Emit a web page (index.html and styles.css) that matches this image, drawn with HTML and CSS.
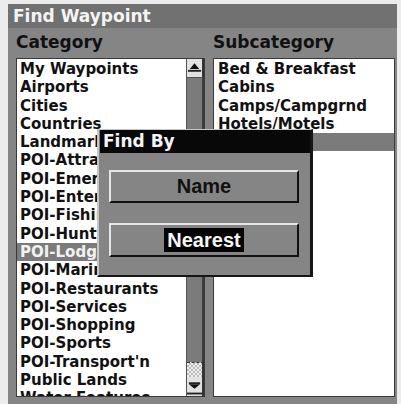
FILE: index.html
```html
<!DOCTYPE html>
<html>
<head>
<meta charset="utf-8">
<link rel="stylesheet" href="styles.css">
</head>
<body>
<div class="frame">
  <div class="titlebar">Find Waypoint</div>
  <div class="columns">
    <div class="col">
      <div class="head">Category</div>
      <div class="listbox">
        <ul class="items">
          <li>My Waypoints</li>
          <li>Airports</li>
          <li>Cities</li>
          <li>Countries</li>
          <li>Landmarks</li>
          <li>POI-Attractions</li>
          <li>POI-Emergency</li>
          <li>POI-Entertainment</li>
          <li>POI-Fishing</li>
          <li>POI-Hunting</li>
          <li class="sel">POI-Lodging</li>
          <li>POI-Marine</li>
          <li>POI-Restaurants</li>
          <li>POI-Services</li>
          <li>POI-Shopping</li>
          <li>POI-Sports</li>
          <li>POI-Transport'n</li>
          <li>Public Lands</li>
          <li>Water Features</li>
        </ul>
        <div class="scrollbar">
          <div class="sbtn up">
            <svg width="16" height="18" viewBox="0 0 16 18"><polygon points="3,10 13,10 8,4" fill="#111"/><rect x="1" y="11" width="14" height="2" fill="#222"/></svg>
          </div>
          <div class="track"></div>
          <div class="thumb"></div>
          <div class="sbtn down">
            <svg width="16" height="19" viewBox="0 0 16 19"><rect x="2" y="5" width="12" height="2" fill="#222"/><polygon points="2,7 14,7 8,12" fill="#111"/><rect x="0" y="16" width="16" height="2" fill="#222"/></svg>
          </div>
        </div>
      </div>
    </div>
    <div class="col">
      <div class="head">Subcategory</div>
      <div class="listbox">
        <ul class="items sub">
          <li>Bed &amp; Breakfast</li>
          <li>Cabins</li>
          <li>Camps/Campgrnd</li>
          <li>Hotels/Motels</li>
          <li class="sel">Other</li>
        </ul>
      </div>
    </div>
  </div>
  <div class="dialog">
    <div class="dtitle">Find By</div>
    <div class="dbody">
      <div class="btn">Name</div>
      <div class="btn"><span class="hl">Nearest</span></div>
    </div>
  </div>
</div>
</body>
</html>
```
FILE: styles.css
```css
html, body {
  margin: 0;
  padding: 0;
}
body {
  background: #ececec;
  width: 401px;
  height: 404px;
  overflow: hidden;
  font-family: "DejaVu Sans", sans-serif;
  font-weight: bold;
}
.frame {
  position: relative;
  margin: 4px 0 0 8px;
  width: 389px;
  height: 400px;
  background: #858585;
  overflow: hidden;
}
.titlebar {
  height: 24px;
  line-height: 24px;
  padding-left: 5px;
  font-size: 17px;
  color: #f4f4f4;
  background: #717171;
}
.columns {
  display: grid;
  grid-template-columns: 189px 182px;
  column-gap: 8px;
  padding-left: 8px;
}
.col {
  display: flex;
  flex-direction: column;
}
.head {
  height: 30px;
  line-height: 28px;
  font-size: 17px;
  color: #111;
}
.listbox {
  height: 339px;
  box-sizing: border-box;
  border: 1px solid #3a3a3a;
  background: #fff;
  display: flex;
  overflow: hidden;
}
.items {
  flex: 1;
  margin: 0;
  padding: 1px 0 0 0;
  list-style: none;
  font-size: 15px;
  line-height: 18.3px;
  color: #111;
  overflow: hidden;
  white-space: nowrap;
}
.items li {
  padding-left: 3px;
  height: 18.3px;
}
.items.sub li {
  padding-left: 4px;
}
.items li.sel {
  background: #7b7b7b;
  color: #f2f2f2;
}
.scrollbar {
  width: 18px;
  display: flex;
  flex-direction: column;
  background: #7a7a7a;
  border-left: 1px solid #555;
  box-sizing: border-box;
}
.sbtn {
  background: #e2e2e2;
  border-right: 2px solid #333;
  display: flex;
}
.sbtn.up {
  height: 18px;
}
.sbtn.down {
  height: 19px;
}
.track {
  flex: 1;
  background: #7b7b7b;
  border-right: 2px solid #3c3c3c;
  border-top: 1px solid #555;
}
.thumb {
  height: 14px;
  border-right: 2px solid #333;
  border-top: 1px dashed #333;
  background: repeating-conic-gradient(#b8b8b8 0 25%, #f2f2f2 0 50%) 0 0 / 4px 4px;
}
.dialog {
  position: absolute;
  left: 89px;
  top: 125px;
  width: 216px;
  height: 148px;
  box-sizing: border-box;
  background: #858585;
  border-top: 1px solid #c6c6c6;
  border-left: 2px solid #c6c6c6;
  border-right: 3px solid #151515;
  border-bottom: 2px solid #151515;
}
.dtitle {
  height: 23px;
  line-height: 23px;
  background: #080808;
  color: #f4f4f4;
  font-size: 17px;
  padding-left: 3px;
  margin-left: 1px;
}
.dbody {
  display: flex;
  flex-direction: column;
  gap: 20px;
  padding: 17px 11px 0 10px;
}
.btn {
  height: 33px;
  box-sizing: border-box;
  border-top: 2px solid #e6e6e6;
  border-left: 2px solid #e6e6e6;
  border-bottom: 2px solid #111;
  border-right: 2px solid #111;
  display: flex;
  align-items: center;
  justify-content: center;
  font-family: "Liberation Sans", Arial, sans-serif;
  font-size: 20px;
  color: #111;
}
.btn + .btn {
  height: 34px;
}
.hl {
  background: #050505;
  color: #f6f6f6;
  padding: 0 3px;
  line-height: 24px;
}
```
